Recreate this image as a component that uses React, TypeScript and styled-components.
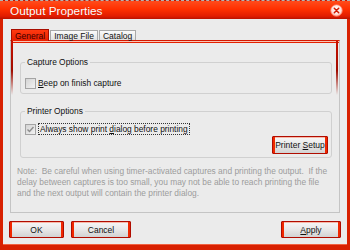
import React from 'react';
import styled, { createGlobalStyle } from 'styled-components';

const GlobalStyle = createGlobalStyle`
  html, body {
    margin: 0;
    padding: 0;
    background: #ffffff;
  }
  body {
    font-family: 'Liberation Sans', Arial, sans-serif;
  }
`;

const Window = styled.div`
  width: 350px;
  height: 250px;
  display: flex;
  flex-direction: column;
  overflow: hidden;
`;

const TitleBar = styled.div`
  height: 19px;
  box-sizing: border-box;
  display: flex;
  align-items: center;
  justify-content: space-between;
  padding: 1px 7px 0 10px;
  background: linear-gradient(#ff4c1c 0%, #ff3000 45%, #e01c00 85%, #b81200 100%);
  border-top: 1px dashed #b4b4b4;
  color: #ffffff;
  font-size: 11.8px;
  text-shadow: 0 0 1px rgba(120, 0, 0, 0.4);
`;

const Frame = styled.div`
  flex: 1;
  box-sizing: border-box;
  display: flex;
  flex-direction: column;
  background: #ebebeb;
  border-left: 3px solid #d82000;
  border-right: 3px solid #d82000;
  border-bottom: 5px solid #d82000;
  box-shadow: inset 0 -1px 0 #f06040;
  padding: 10px 7px 0 7px;
`;

const TabStrip = styled.div`
  display: flex;
  align-items: flex-start;
  padding-left: 1px;
  height: 11px;
  position: relative;
  z-index: 1;
`;

const Tab = styled.div<{ $active?: boolean }>`
  box-sizing: border-box;
  height: ${(p) => (p.$active ? '12px' : '10px')};
  margin-top: ${(p) => (p.$active ? '0' : '1px')};
  margin-right: 1px;
  padding: 0 3px;
  display: flex;
  align-items: center;
  font-size: 8.5px;
  color: ${(p) => (p.$active ? '#3a0000' : '#111111')};
  background: ${(p) =>
    p.$active
      ? 'linear-gradient(#ff3a10, #e81e00)'
      : 'linear-gradient(#fafafa, #e2e2e2)'};
  border: 1px solid ${(p) => (p.$active ? '#a80e00' : '#a8a8a8')};
  border-bottom: none;
`;

const Panel = styled.div`
  position: relative;
  height: 173px;
  box-sizing: border-box;
  border: 1px solid #c4c4c4;
  border-top: 1px solid #d41800;
  box-shadow: inset 0 1px 0 #f8c4b4, inset 0 2px 0 #e42000;
  padding: 16px 7px 0 6px;
  display: flex;
  flex-direction: column;

  &::before,
  &::after {
    content: '';
    position: absolute;
    top: 0;
    width: 2px;
    height: 54px;
    background: linear-gradient(#c81000, #a00c00 55%, rgba(230, 60, 40, 0));
  }
  &::before {
    left: 0;
  }
  &::after {
    right: 1px;
  }
`;

const Group = styled.fieldset<{ $gap?: number }>`
  margin: ${(p) => p.$gap ?? 0}px 0 0 3px;
  border: 1px solid #d0d0d0;
  border-radius: 3px;
  padding: 0 0 0 4px;
  min-inline-size: 0;
`;

const Legend = styled.legend`
  padding: 0 2px;
  margin-left: 0;
  font-size: 8.4px;
  line-height: 10px;
  color: #111111;
`;

const GroupBody = styled.div<{ $top: number; $bottom: number }>`
  display: flex;
  flex-direction: column;
  padding: ${(p) => p.$top}px 3px ${(p) => p.$bottom}px 0;
`;

const CheckRow = styled.label`
  display: flex;
  align-items: center;
  gap: 2px;
  height: 12px;
  font-size: 8.4px;
  color: #111111;
`;

const Box = styled.span`
  width: 11px;
  height: 11px;
  box-sizing: border-box;
  border: 1px solid #a4a4a4;
  background: linear-gradient(135deg, #d4d4d4, #f2f2f2);
  display: flex;
  align-items: center;
  justify-content: center;
`;

const Focus = styled.span`
  border: 1px dotted #333333;
  padding: 0 1px;
  line-height: 10px;
`;

const RightRow = styled.div`
  display: flex;
  justify-content: flex-end;
  margin-top: 1px;
`;

const Button = styled.button<{ $w: number; $h?: number }>`
  width: ${(p) => p.$w}px;
  height: ${(p) => p.$h ?? 17}px;
  box-sizing: border-box;
  padding: 0;
  font-family: 'Liberation Sans', Arial, sans-serif;
  font-size: 8.5px;
  color: #111111;
  border: 1px solid #b00c00;
  border-radius: 1px;
  background: linear-gradient(#f6f6f6, #e6e6e6 55%, #d2d2d2);
  box-shadow: inset 2px 0 0 #f02800, inset -2px 0 0 #f02800,
    inset 0 1px 0 #f8b8a8;
  u {
    text-decoration-thickness: 1px;
  }
`;

const Note = styled.div`
  margin-top: 8px;
  font-size: 8.4px;
  line-height: 11px;
  color: #9c9c9c;
  white-space: pre;
`;

const ButtonRow = styled.div`
  display: flex;
  gap: 7px;
  margin: 8px -1px 0 -1px;
`;

const Spacer = styled.div`
  flex: 1;
`;

function CloseIcon() {
  return (
    <svg width="13" height="13" viewBox="0 0 13 13">
      <defs>
        <radialGradient id="cg" cx="50%" cy="40%" r="60%">
          <stop offset="0%" stopColor="#ffffff" />
          <stop offset="70%" stopColor="#ffe2dc" />
          <stop offset="100%" stopColor="#ff9a88" />
        </radialGradient>
      </defs>
      <circle cx="6.5" cy="6.5" r="5.8" fill="url(#cg)" stroke="#ff7a60" strokeWidth="0.8" />
      <path d="M4.3 4.3 L8.7 8.7 M8.7 4.3 L4.3 8.7" stroke="#d01800" strokeWidth="1.5" strokeLinecap="round" />
    </svg>
  );
}

function Check() {
  return (
    <svg width="9" height="9" viewBox="0 0 9 9">
      <path d="M1.5 4.5 L3.5 6.5 L7.5 2" fill="none" stroke="#8c8c8c" strokeWidth="1.4" />
    </svg>
  );
}

export default function App() {
  return (
    <>
      <GlobalStyle />
      <Window>
        <TitleBar>
          <span>Output Properties</span>
          <CloseIcon />
        </TitleBar>
        <Frame>
          <TabStrip>
            <Tab $active>General</Tab>
            <Tab>Image File</Tab>
            <Tab>Catalog</Tab>
          </TabStrip>
          <Panel>
            <Group>
              <Legend>Capture Options</Legend>
              <GroupBody $top={10} $bottom={4}>
                <CheckRow>
                  <Box />
                  <span>
                    <u>B</u>eep on finish capture
                  </span>
                </CheckRow>
              </GroupBody>
            </Group>
            <Group $gap={12}>
              <Legend>Printer Options</Legend>
              <GroupBody $top={7} $bottom={3}>
                <CheckRow>
                  <Box>
                    <Check />
                  </Box>
                  <Focus>
                    Always show print <u>d</u>ialog before printing
                  </Focus>
                </CheckRow>
                <RightRow>
                  <Button $w={56} $h={18}>
                    Printer <u>S</u>etup
                  </Button>
                </RightRow>
              </GroupBody>
            </Group>
            <Note>
              {'Note:  Be careful when using timer-activated captures and printing the output.  If the\n'}
              {'delay between captures is too small, you may not be able to reach printing the file\n'}
              {'and the next output will contain the printer dialog.'}
            </Note>
          </Panel>
          <ButtonRow>
            <Button $w={55}>OK</Button>
            <Button $w={60}>Cancel</Button>
            <Spacer />
            <Button $w={60}>
              <u>A</u>pply
            </Button>
          </ButtonRow>
        </Frame>
      </Window>
    </>
  );
}
